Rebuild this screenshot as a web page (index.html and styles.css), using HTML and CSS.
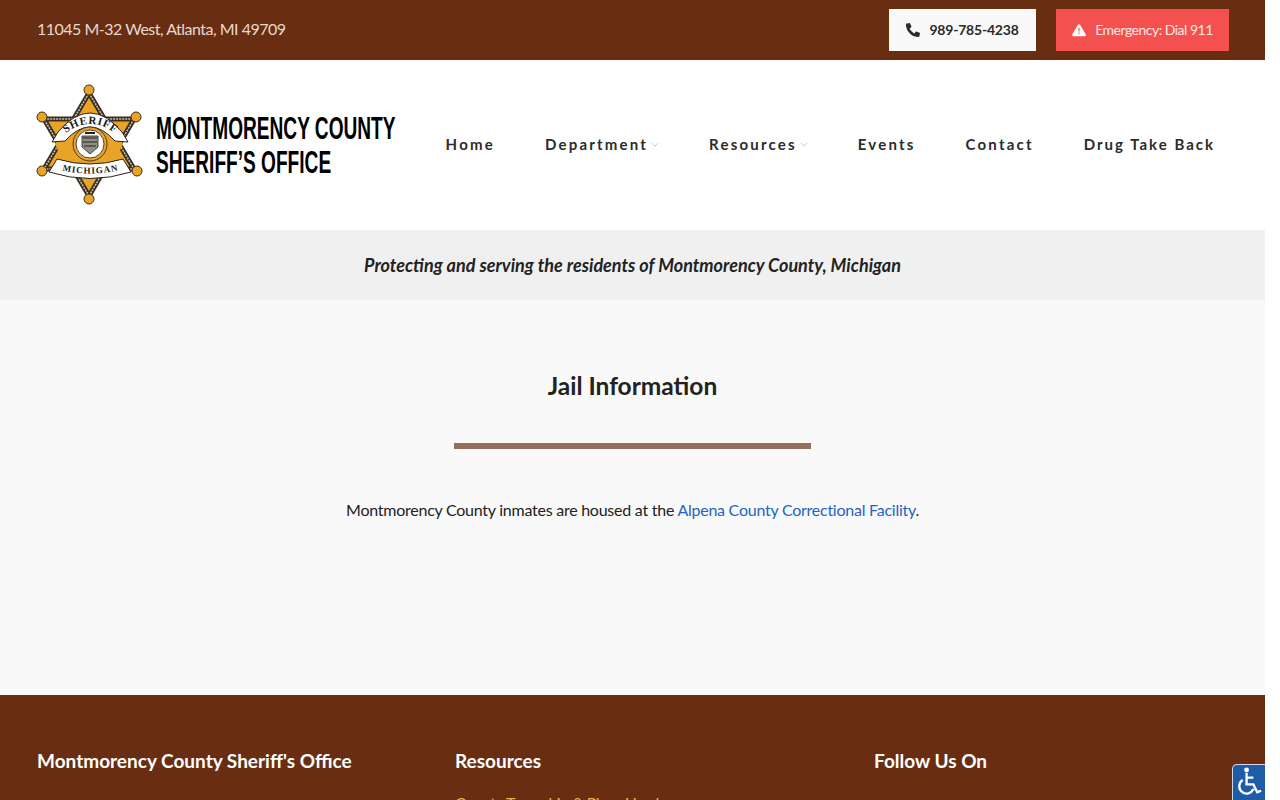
FILE: index.html
```html
<!DOCTYPE html>
<html lang="en">
<head>
  <meta charset="UTF-8">
  <title>Jail Information - Montmorency County Sheriff's Office</title>
  <link rel="stylesheet" href="styles.css">
</head>
<body>
<div class="page">
  <div class="topbar">
    <span class="address">11045 M-32 West, Atlanta, MI 49709</span>
    <div class="top-btns">
      <a class="btn btn-phone" href="#">
        <svg class="ico" viewBox="0 0 512 512"><path d="M493 24l-104-24c-11-3-23 3-27 14l-48 112c-4 10-1 21 7 28l61 50c-36 76-98 139-176 176l-50-61c-7-8-18-11-28-7l-112 48c-11 5-17 16-14 28l24 104c2 11 12 19 23 19 257 0 466-208 466-466 0-11-8-21-19-23z" transform="matrix(-1 0 0 1 512 0)"/></svg>
        989-785-4238
      </a>
      <a class="btn btn-emergency" href="#">
        <svg class="ico" viewBox="0 0 576 512"><path fill-rule="evenodd" d="M288 16c-18 0-35 10-44 26L8 440c-18 32 5 72 44 72h472c39 0 62-40 44-72L332 42c-9-16-26-26-44-26zM260 170h56l-8 160h-40zM288 360a30 30 0 1 1 0 60 30 30 0 0 1 0-60z"/></svg>
        Emergency: Dial 911
      </a>
    </div>
  </div>

  <header class="header">
    <a class="logo" href="#">
      <svg class="badge" viewBox="0 0 108 122">
        <defs>
          <path id="arcTop" d="M25 54 Q55 26 86 54"/>
          <path id="arcBot" d="M18 84 Q55 95 93 84"/>
        </defs>
        <!-- star body -->
        <polygon points="54,6 70,33 101,33 85.500,60 102,87 70,87 54,115 38,87 7,87 22.500,60 7,33 38,33" fill="#e9a427"/>
        <!-- the two triangles' edges make the dark bands -->
        <g fill="none" stroke-linejoin="round">
          <polygon points="54,9 99,85 9,85" stroke="#3a2d1e" stroke-width="5"/>
          <polygon points="54,112 99,35 9,35" stroke="#3a2d1e" stroke-width="5"/>
          <polygon points="54,9 99,85 9,85" stroke="#c9c2b0" stroke-width="1.500" stroke-dasharray="2 1"/>
          <polygon points="54,112 99,35 9,35" stroke="#c9c2b0" stroke-width="1.500" stroke-dasharray="2 1"/>
        </g>
        <polygon points="54,17 63,33 45,33" fill="#e9a427"/>
        <polygon points="54,104 63,88 45,88" fill="#e9a427"/>
        <polygon points="30,40 78,40 88,60 78,81 30,81 20,60" fill="#e9a427"/>
        <g fill="#e9a427" stroke="#3a2d1e" stroke-width="1">
          <circle cx="54" cy="6" r="5"/>
          <circle cx="54" cy="115" r="5"/>
          <circle cx="7" cy="33" r="5"/>
          <circle cx="101" cy="33" r="5"/>
          <circle cx="7" cy="87" r="5"/>
          <circle cx="102" cy="87" r="5"/>
        </g>
        <!-- banners -->
        <path d="M23 48 Q55 10 87 48 L93 58 L80 57 Q55 29 30 57 L17 58 Z" fill="#fff" stroke="#2a2118" stroke-width="1"/>
        <path d="M22 75 Q55 85 88 75 L96 88 Q55 101 14 88 Z" fill="#fff" stroke="#2a2118" stroke-width="1"/>
        <!-- seal -->
        <circle cx="55" cy="60" r="17" fill="#e9a427" stroke="#2a2118" stroke-width=".8"/>
        <circle cx="55" cy="60" r="14" fill="#fff" stroke="#2a2118" stroke-width=".8"/>
        <path d="M47 52h16v11l-8 7-8-7z" fill="#8f8f88" stroke="#2a2118" stroke-width=".8"/>
        <path d="M48 54h14M48 58h14M49 62h12" stroke="#2a2118" stroke-width="1"/>
        <path d="M50 49h10" stroke="#2a2118" stroke-width="2"/>
        <text class="badge-text"><textPath href="#arcTop" startOffset="50%" text-anchor="middle">SHERIFF</textPath></text>
        <text class="badge-text small"><textPath href="#arcBot" startOffset="50%" text-anchor="middle">MICHIGAN</textPath></text>
      </svg>
      <div class="logo-name">
        <span>MONTMORENCY COUNTY</span>
        <span>SHERIFF’S OFFICE</span>
      </div>
    </a>
    <nav class="nav">
      <a href="#">Home</a>
      <a href="#">Department<svg class="caret" viewBox="0 0 10 6"><path d="M1 1l4 4 4-4"/></svg></a>
      <a href="#">Resources<svg class="caret" viewBox="0 0 10 6"><path d="M1 1l4 4 4-4"/></svg></a>
      <a href="#">Events</a>
      <a href="#">Contact</a>
      <a class="nav-last" href="#">Drug Take Back</a>
    </nav>
  </header>

  <div class="tagline">Protecting and serving the residents of Montmorency County, Michigan</div>

  <main class="content">
    <h1>Jail Information</h1>
    <div class="rule"></div>
    <p>Montmorency County inmates are housed at the <a href="#">Alpena County Correctional Facility</a>.</p>
  </main>

  <footer class="footer">
    <div class="foot-col">
      <h3>Montmorency County Sheriff's Office</h3>
    </div>
    <div class="foot-col">
      <h3>Resources</h3>
      <a href="#">County Township &amp; Place Used</a>
    </div>
    <div class="foot-col">
      <h3>Follow Us On</h3>
    </div>
  </footer>

  <a class="access" href="#">
    <svg viewBox="0 0 33 36"><circle cx="14" cy="5" r="2.500" fill="#fff"/><path d="M14 8v12h7l4 8 4-1.500M14 13h7M10 15.500a7.500 7.500 0 1 0 11 9" fill="none" stroke="#fff" stroke-width="2.400"/></svg>
  </a>
</div>
</body>
</html>
```
FILE: styles.css
```css
* {
  box-sizing: border-box;
}
html, body {
  margin: 0;
  height: 800px;
  overflow: hidden;
  background: #fff;
}
body {
  font-family: "Lato", "Liberation Sans", sans-serif;
  color: #222;
}
a {
  text-decoration: none;
}
.page {
  position: relative;
  width: 1265px;
  height: 800px;
  overflow: hidden;
  display: flex;
  flex-direction: column;
}
.topbar {
  height: 60px;
  flex: none;
  background: #692e12;
  padding: 0 36px 0 37px;
  display: flex;
  align-items: center;
  justify-content: space-between;
}
.address {
  color: #e6d9d0;
  font-size: 16px;
  letter-spacing: -.5px;
  padding-bottom: 3px;
}
.top-btns {
  display: flex;
  gap: 20px;
}
.btn {
  height: 42px;
  display: flex;
  align-items: center;
  justify-content: center;
  gap: 9px;
  font-size: 14px;
  padding-bottom: 1px;
}
.btn-phone {
  width: 147px;
  background: #f9f9f9;
  color: #2b2b2b;
  font-weight: 700;
  letter-spacing: -.2px;
}
.btn-emergency {
  width: 173px;
  background: #f55050;
  color: #fde9e7;
  letter-spacing: -.5px;
}
.ico {
  width: 14px;
  height: 14px;
  fill: currentColor;
  flex: none;
}
.btn-emergency .ico {
  fill: #fff;
}
.header {
  height: 170px;
  flex: none;
  padding: 0 50px 0 35px;
  display: flex;
  align-items: center;
  justify-content: space-between;
}
.logo {
  display: flex;
  align-items: center;
  gap: 13px;
}
.badge {
  width: 108px;
  height: 122px;
}
.badge-text {
  font-family: "Liberation Serif", serif;
  font-weight: 700;
  font-size: 11px;
  letter-spacing: .8px;
  fill: #1d1a16;
}
.badge-text.small {
  font-size: 9px;
  letter-spacing: 1px;
}
.logo-name {
  width: 240px;
  display: flex;
  flex-direction: column;
  gap: 2px;
  color: #000;
  font-family: "Liberation Sans", sans-serif;
  font-weight: 700;
  font-size: 32px;
  line-height: 32px;
  white-space: nowrap;
}
.logo-name span {
  display: block;
  transform: scaleX(.597);
  transform-origin: left center;
}
.nav {
  display: flex;
  gap: 50px;
  padding-bottom: 2px;
}
.nav a {
  color: #2b2b2b;
  font-size: 15px;
  font-weight: 700;
  letter-spacing: 2.200px;
  display: flex;
  align-items: center;
  white-space: nowrap;
}
.nav .nav-last {
  letter-spacing: 2px;
}
.caret {
  width: 8px;
  height: 5px;
  margin-left: 3px;
  fill: none;
  stroke: #bdbdbd;
}
.tagline {
  height: 70px;
  flex: none;
  background: #f0f0f0;
  display: flex;
  align-items: center;
  justify-content: center;
  font-size: 18px;
  font-style: italic;
  font-weight: 700;
  padding-bottom: 1px;
}
.content {
  height: 395px;
  flex: none;
  background: #f9f9f9;
  display: flex;
  flex-direction: column;
  align-items: center;
  padding-top: 69px;
}
.content h1 {
  margin: 0;
  font-size: 24.500px;
  line-height: 34px;
  font-weight: 700;
}
.rule {
  width: 357px;
  height: 6px;
  margin-top: 40px;
  background: #966f5c;
}
.content p {
  margin: 50px 0 0;
  font-size: 16px;
  line-height: 22px;
  letter-spacing: -.25px;
}
.content p a {
  color: #2263c9;
}
.footer {
  flex: 1;
  background: #692e12;
  padding: 52px 37px 0;
  display: grid;
  grid-template-columns: 418px 419px 1fr;
}
.foot-col h3 {
  margin: 0 0 18px;
  color: #fff;
  font-size: 19px;
  line-height: 28px;
  font-weight: 700;
}
.foot-col a {
  display: block;
  color: #efb24a;
  font-size: 16px;
  letter-spacing: -.5px;
}
.access {
  position: absolute;
  right: 0;
  bottom: 0;
  width: 33px;
  height: 36px;
  background: #1f5ca8;
  border: 1px solid #cfd8e6;
  border-right: 0;
  border-bottom: 0;
  border-radius: 5px 0 0 0;
}
.access svg {
  display: block;
  width: 100%;
  height: 100%;
}
```
